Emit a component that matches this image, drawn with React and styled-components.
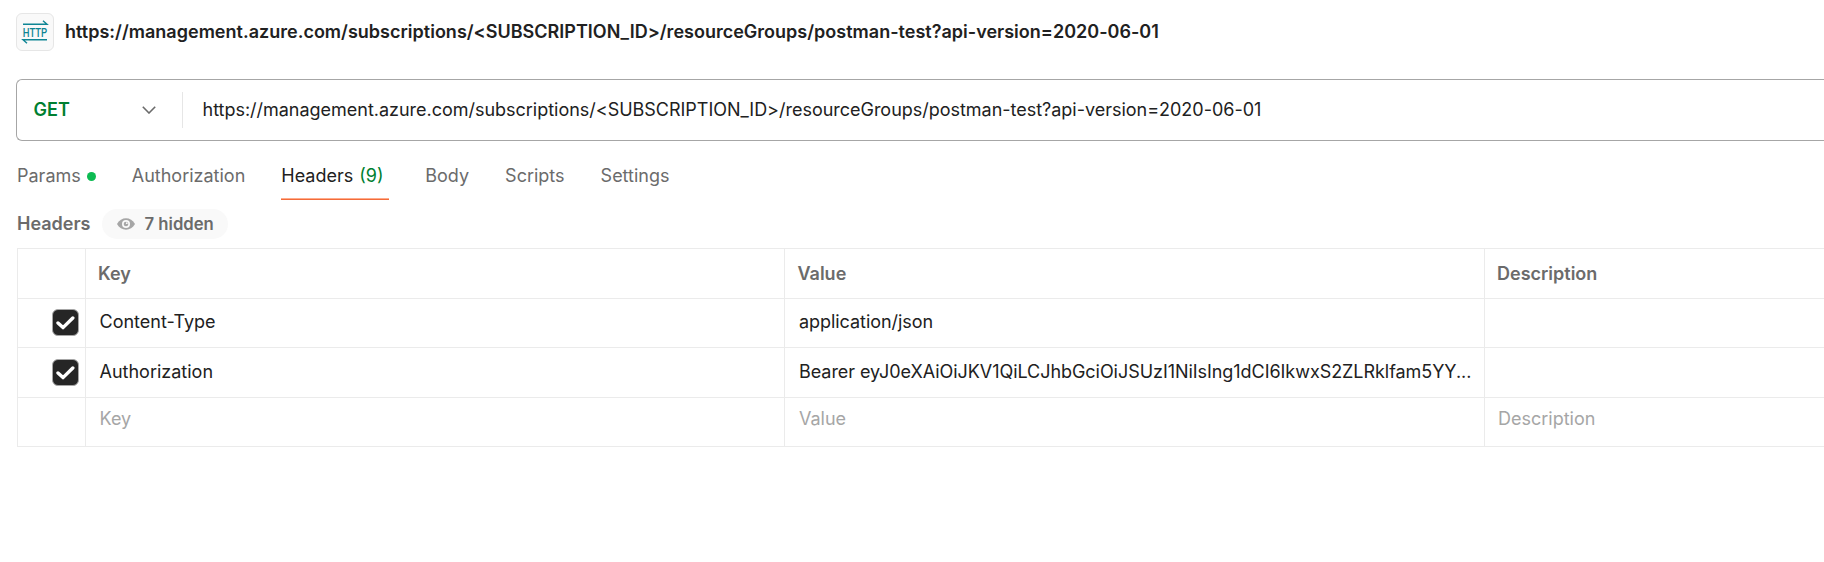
import React from 'react';
import styled, { createGlobalStyle, css } from 'styled-components';

const Global = createGlobalStyle`
  * { box-sizing: border-box; }
  body { margin: 0; background: #fff; overflow: hidden; }
  #root { font-family: Inter, sans-serif; font-size: 18px; font-weight: 400; color: #212121; line-height: 24px; }
`;

const Page = styled.main`
  height: 562px;
  padding: 13px 0 0 16px;
  overflow: hidden;
`;

const TitleBar = styled.header`
  display: flex;
  align-items: center;
  gap: 11px;
  height: 38px;
`;

const Badge = styled.span`
  display: grid;
  place-items: center;
  width: 38px;
  height: 38px;
  background: #f9f9f9;
  border: 1px solid #e6e6e6;
  border-radius: 6px;
`;

const Title = styled.h1`
  margin: 0;
  font-size: 18px;
  font-weight: 600;
  letter-spacing: 0.012px;
  white-space: nowrap;
`;

const RequestBar = styled.div`
  display: flex;
  align-items: center;
  height: 62px;
  margin-top: 28px;
  border: 1px solid #a6a6a6;
  border-right: 0;
  border-radius: 6px 0 0 6px;
`;

const Method = styled.div`
  display: flex;
  align-items: center;
  justify-content: space-between;
  width: 166px;
  height: 36px;
  padding: 0 26px 0 16.5px;
  border-right: 1px solid #e6e6e6;
  color: #007f31;
  font-weight: 600;
`;

const Url = styled.div`
  padding-left: 19.5px;
  letter-spacing: -0.018px;
  white-space: nowrap;
`;

const Tabs = styled.nav`
  display: flex;
  gap: 36px;
  height: 59px;
  padding-left: 1px;
`;

const Tab = styled.div`
  display: flex;
  align-items: center;
  gap: 6px;
  height: 59px;
  padding-top: 11px;
  color: ${(p) => (p.$active ? '#212121' : '#6b6b6b')};
  ${(p) => p.$active && css`
    width: 108px;
    background: linear-gradient(#ffab8a 50%, #f26b3a 50%) bottom / 100% 2px no-repeat;
  `}
`;

const Dot = styled.i`
  width: 9px;
  height: 9px;
  border-radius: 50%;
  background: #0cbb52;
`;

const Count = styled.span`
  color: #007f31;
`;

const SubHeader = styled.div`
  display: flex;
  align-items: center;
  gap: 11px;
  height: 30px;
  margin: 9px 0;
  padding-left: 1px;
  color: #6b6b6b;
  font-weight: 600;
`;

const Pill = styled.span`
  display: flex;
  align-items: center;
  gap: 10px;
  height: 30px;
  width: 126px;
  padding-left: 15px;
  border-radius: 15px;
  background: #f9f9f9;
  font-size: 16.7px;
`;

const Table = styled.div`
  margin-left: 1px;
  border: solid #ebebeb;
  border-width: 1px 0 0 1px;
`;

const Row = styled.div`
  display: grid;
  grid-template-columns: 68px 699px 700px 1fr;
  height: ${(p) => p.$height}px;
  border-bottom: 1px solid #ebebeb;
  color: ${(p) => p.$color || '#212121'};
  font-weight: ${(p) => (p.$head ? 600 : 400)};
`;

const Cell = styled.div`
  display: flex;
  align-items: center;
  min-width: 0;
  padding: ${(p) => p.$pad || '0 8px 2px 14px'};
  border-right: 1px solid #ebebeb;
  &:last-child { border-right: 0; }
`;

const Ellipsis = styled.span`
  overflow: hidden;
  text-overflow: ellipsis;
  letter-spacing: -0.05px;
  white-space: nowrap;
`;

const Box = styled.span`
  display: grid;
  place-items: center;
  width: 27px;
  height: 27px;
  margin-left: 34px;
  border: 1px solid #a6a6a6;
  border-radius: 6px;
  background: #262626;
`;

const url = 'https://management.azure.com/subscriptions/<SUBSCRIPTION_ID>/resourceGroups/postman-test?api-version=2020-06-01';

const HttpIcon = () => (
  <svg width="26" height="26" viewBox="0 0 26 26" overflow="visible" fill="none" stroke="#0e8594" strokeWidth="1.4">
    <path d="M1 5.3H25L21 1.8M25 20.8H1L5 24.3" />
    <text x="0.8" y="17.8" fontFamily="Roboto, sans-serif" fontSize="13.4" fontWeight="500" textLength="24.4" lengthAdjust="spacingAndGlyphs" fill="#0e8594" stroke="none">HTTP</text>
  </svg>
);

const Chevron = () => (
  <svg width="14" height="8" viewBox="0 0 14 8" fill="none" stroke="#6b6b6b" strokeWidth="1.6">
    <path d="M.8 .8 7 7 13.2 .8" />
  </svg>
);

const Eye = () => (
  <svg width="18" height="12" viewBox="0 0 18 12">
    <path d="M0 6C4-1.6 14-1.6 18 6 14 13.6 4 13.6 0 6Z" fill="#a6a6a6" />
    <circle cx="9" cy="6" r="4" fill="#f9f9f9" />
    <circle cx="9" cy="6" r="2.3" fill="#a6a6a6" />
    <circle cx="9.8" cy="5.2" r=".9" fill="#f9f9f9" />
  </svg>
);

const Checkbox = () => (
  <Box>
    <svg width="19" height="15" viewBox="0 0 19 15" fill="none" stroke="#fff" strokeWidth="3.4" strokeLinecap="round" strokeLinejoin="round">
      <path d="M2 8 7 12.6 16.8 3" />
    </svg>
  </Box>
);

const rows = [
  { key: 'Content-Type', value: 'application/json', height: 49, boxPad: '0 0 1px' },
  { key: 'Authorization', value: 'Bearer eyJ0eXAiOiJKV1QiLCJhbGciOiJSUzI1NiIsIng1dCI6IkwxS2ZLRklfam5YY...', height: 50, boxPad: '0' },
];

export default function App() {
  return (
    <Page>
      <Global />
      <TitleBar>
        <Badge><HttpIcon /></Badge>
        <Title>{url}</Title>
      </TitleBar>
      <RequestBar>
        <Method>GET<Chevron /></Method>
        <Url>{url}</Url>
      </RequestBar>
      <Tabs>
        <Tab>Params<Dot /></Tab>
        <Tab>Authorization</Tab>
        <Tab $active>Headers<Count>(9)</Count></Tab>
        <Tab>Body</Tab>
        <Tab>Scripts</Tab>
        <Tab>Settings</Tab>
      </Tabs>
      <SubHeader>
        Headers
        <Pill><Eye />7 hidden</Pill>
      </SubHeader>
      <Table>
        <Row $head $height={50} $color="#6b6b6b">
          <Cell />
          <Cell $pad="0 12px">Key</Cell>
          <Cell $pad="0 12px 0 12.5px">Value</Cell>
          <Cell $pad="0 12px">Description</Cell>
        </Row>
        {rows.map((r) => (
          <Row key={r.key} $height={r.height}>
            <Cell $pad={r.boxPad}><Checkbox /></Cell>
            <Cell $pad="0 13.5px 2px">{r.key}</Cell>
            <Cell><Ellipsis>{r.value}</Ellipsis></Cell>
            <Cell />
          </Row>
        ))}
        <Row $height={49} $color="#a6a6a6">
          <Cell />
          <Cell $pad="0 13.5px 6px">Key</Cell>
          <Cell $pad="0 14px 6px">Value</Cell>
          <Cell $pad="0 13px 6px">Description</Cell>
        </Row>
      </Table>
    </Page>
  );
}
